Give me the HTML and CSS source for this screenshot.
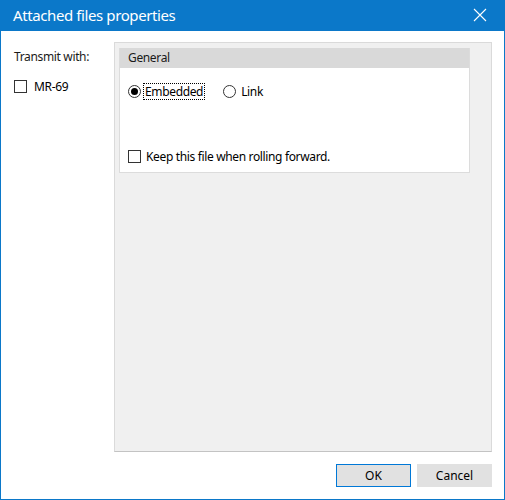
FILE: index.html
```html
<!DOCTYPE html>
<html>
<head>
<meta charset="utf-8">
<link rel="stylesheet" href="styles.css">
</head>
<body>
<div class="window">
  <div class="titlebar">
    <span class="title">Attached files properties</span>
    <svg class="close" width="14" height="14" viewBox="0 0 14 14"><path d="M1 1L13 13M13 1L1 13" stroke="#fff" stroke-width="1.1"/></svg>
  </div>
  <div class="client">
    <div class="main">
      <div class="left">
        <div class="label">Transmit with:</div>
        <label class="check-row"><span class="box"></span><span>MR-69</span></label>
      </div>
      <div class="panel">
        <div class="group">
          <div class="group-head">General</div>
          <div class="group-body">
            <div class="radios">
              <span class="radio-item"><span class="radio on"></span><span class="focus">Embedded</span></span>
              <span class="radio-item"><span class="radio"></span><span class="rtext">Link</span></span>
            </div>
            <label class="check-row keep"><span class="box"></span><span>Keep this file when rolling forward.</span></label>
          </div>
        </div>
      </div>
    </div>
    <div class="buttons">
      <button class="btn default">OK</button>
      <button class="btn">Cancel</button>
    </div>
  </div>
</div>
</body>
</html>
```
FILE: styles.css
```css
html, body { margin: 0; padding: 0; background: #fff; }
body { font-family: "Noto Sans", "Liberation Sans", sans-serif; font-size: 12px; color: #000; letter-spacing: -0.35px; }
.window {
  width: 505px; height: 500px; box-sizing: border-box;
  background: #0b78c9; padding: 0 1px 1px 1px;
  display: flex; flex-direction: column;
}
.titlebar {
  height: 31px; display: flex; align-items: center; justify-content: space-between;
  padding: 0 17px 0 12px; color: #fff; flex: none;
}
.title { font-size: 15px; letter-spacing: -0.4px; margin-top: -1px; }
.close { margin-top: -1px; }
.client { flex: 1; background: #fff; display: flex; flex-direction: column; padding: 11px 12px 12px 13px; }
.main { display: flex; flex: 1; }
.left { width: 100px; flex: none; }
.label { margin-top: 7px; line-height: 16px; color: #1a1a1a; }
.check-row { display: flex; align-items: center; gap: 7px; }
.left .check-row { margin-top: 13px; }
.box { width: 11px; height: 11px; border: 1px solid #333; background: #fff; display: inline-block; flex: none; }
.panel {
  flex: 1; background: #f0f0f0; border: 1px solid #dadada; border-bottom-color: #c3c3c3;
  padding: 5px 21px 0 4px; box-sizing: border-box;
}
.group { background: #fff; border: 1px solid #dcdcdc; border-top: 0; height: 125px; box-sizing: border-box; }
.group-head { background: #d9d9d9; height: 20px; line-height: 20px; padding-left: 8px; color: #1a1a1a; }
.group-body { padding: 16px 0 0 8px; }
.radios { display: flex; align-items: center; height: 14px; }
.radio-item { display: flex; align-items: center; }
.radio-item + .radio-item { margin-left: 18px; }
.radio { width: 11px; height: 11px; border: 1px solid #333; border-radius: 50%; box-sizing: content-box; position: relative; display: inline-block; }
.radio.on::after { content: ""; position: absolute; left: 2px; top: 2px; width: 7px; height: 7px; border-radius: 50%; background: #000; }
.focus { margin-left: 2px; padding: 0 1px; border: 1px dotted #000; line-height: 15px; }
.rtext { margin-left: 5px; }
.keep { margin-top: 50px; gap: 5px; }
.buttons { display: flex; justify-content: flex-end; gap: 6px; margin-top: 12px; padding-right: 0; }
.btn {
  width: 75px; height: 23px; box-sizing: border-box; font: inherit; color: #000;
  background: #e1e1e1; border: 1px solid #e1e1e1; padding: 0; margin: 0;
}
.btn.default { border-color: #0078d7; }
```
